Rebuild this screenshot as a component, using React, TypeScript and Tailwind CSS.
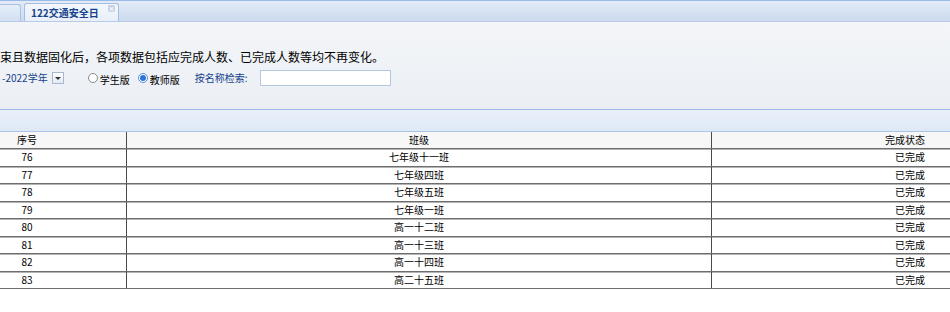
const rows = [
  { no: 76, name: "七年级十一班" },
  { no: 77, name: "七年级四班" },
  { no: 78, name: "七年级五班" },
  { no: 79, name: "七年级一班" },
  { no: 80, name: "高一十二班" },
  { no: 81, name: "高一十三班" },
  { no: 82, name: "高一十四班" },
  { no: 83, name: "高二十五班" },
];

function Row({ a, b, c, head }: { a: string; b: string; c: string; head?: boolean }) {
  return (
    <div
      className={`grid grid-cols-[127px_585px_1fr] border-b border-[#6e6e6e] text-[10px] leading-none text-black ${
        head ? "h-[17px] bg-[#f7f7f7]" : "h-[17.5px] bg-white shadow-[inset_0_1px_0_#b4b4b4]"
      }`}
    >
      <div className="flex items-center justify-center border-r border-[#4a4a4a] pr-[72px]">{a}</div>
      <div className="flex items-center justify-center border-r border-[#4a4a4a]">{b}</div>
      <div className="flex items-center justify-end pr-[25px]">{c}</div>
    </div>
  );
}

export default function App() {
  return (
    <div className="h-[312px] w-[950px] overflow-hidden bg-white font-['Noto_Sans_CJK_SC','Liberation_Sans',sans-serif]">
      {/* tab strip */}
      <div className="flex h-[21px] items-end gap-[3px] border-t border-[#99bbe8] bg-gradient-to-b from-[#e3ebf7] to-[#cbdaef]">
        <div className="h-[17px] w-[21px] rounded-tr-[3px] border-r border-t border-[#a9c1e3] bg-gradient-to-b from-[#e6eef9] to-[#d3e0f2]" />
        <div className="relative flex h-[18px] w-[95px] items-center rounded-t-[3px] border-x border-t border-[#a3bde3] bg-gradient-to-b from-[#f4f8fd] to-[#e8eff9] pl-[6px] text-[10px] font-bold text-[#15428b]">
          122交通安全日
          <span className="absolute right-[3px] top-[1px] flex h-[7px] w-[7px] items-center justify-center rounded-[1px] bg-[#c8d3e3] text-[6px] leading-none text-white">
            ×
          </span>
        </div>
      </div>

      {/* filter panel */}
      <div className="h-[88px] border-t border-[#b7cbe8] bg-gradient-to-b from-[#f3f5f8] to-[#ebeff4] pt-[27px]">
        <div className="text-[12px] leading-[16px] text-black">
          束且数据固化后，各项数据包括应完成人数、已完成人数等均不再变化。
        </div>
        <div className="mt-[4px] flex h-[18px] items-center text-[10px] leading-none">
          <div className="flex items-center text-[#15428b]">
            <span className="pl-[2px]">-2022学年</span>
            <span className="ml-[4px] flex h-[12px] w-[12px] items-center justify-center border border-[#a7b8d0] bg-gradient-to-b from-white to-[#e2e9f3]">
              <span className="h-0 w-0 border-x-[3px] border-t-[3px] border-x-transparent border-t-[#333]" />
            </span>
          </div>
          <label className="ml-[24px] flex items-center gap-[2px] text-black">
            <span className="h-[10px] w-[10px] rounded-full border border-[#8a8a8a] bg-white" />
            <span className="mt-[3px]">学生版</span>
          </label>
          <label className="ml-[8px] flex items-center gap-[2px] text-black">
            <span className="flex h-[10px] w-[10px] items-center justify-center rounded-full border border-[#5b8fd6] bg-white">
              <span className="h-[6px] w-[6px] rounded-full bg-[#2d74d8]" />
            </span>
            <span className="mt-[3px]">教师版</span>
          </label>
          <span className="ml-[15px] text-[#15428b]">按名称检索:</span>
          <div className="ml-[13px] h-[16px] w-[131px] border border-[#b5c8e2] bg-white" />
        </div>
      </div>

      {/* grid toolbar band */}
      <div className="h-[23px] border-y border-t-[#99bbe8] border-b-[#aac4e8] bg-gradient-to-b from-[#e9f0fa] to-[#dfe8f6]" />

      {/* table */}
      <Row head a="序号" b="班级" c="完成状态" />
      {rows.map((r) => (
        <Row key={r.no} a={String(r.no)} b={r.name} c="已完成" />
      ))}
    </div>
  );
}
